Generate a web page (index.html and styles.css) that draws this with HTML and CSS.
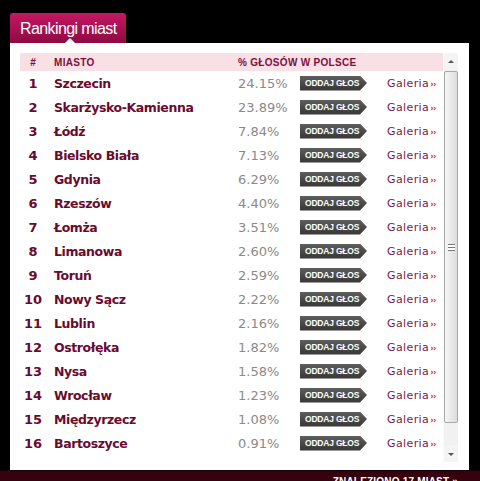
FILE: index.html
```html
<!DOCTYPE html>
<html lang="pl">
  <head>
    <meta charset="UTF-8" />
    <meta name="viewport" content="width=device-width, initial-scale=1.0" />
    <title>Rankingi miast</title>
    <link rel="stylesheet" href="styles.css">
  </head>

  <body>
    <div id="ranking">
      <div class="tab">Rankingi miast</div>

      <div class="panel">
        <div class="list">
          <div class="row head">
            <span class="num">#</span>
            <span class="city">MIASTO</span>
            <span class="pct">% GŁOSÓW W POLSCE</span>
          </div>

          <div class="row"><span class="num">1</span><span class="city">Szczecin</span><span class="pct">24.15%</span><span class="vote"><a class="btn">ODDAJ GŁOS</a></span><a class="gallery">Galeria<b>››</b></a></div>
          <div class="row"><span class="num">2</span><span class="city">Skarżysko-Kamienna</span><span class="pct">23.89%</span><span class="vote"><a class="btn">ODDAJ GŁOS</a></span><a class="gallery">Galeria<b>››</b></a></div>
          <div class="row"><span class="num">3</span><span class="city">Łódź</span><span class="pct">7.84%</span><span class="vote"><a class="btn">ODDAJ GŁOS</a></span><a class="gallery">Galeria<b>››</b></a></div>
          <div class="row"><span class="num">4</span><span class="city">Bielsko Biała</span><span class="pct">7.13%</span><span class="vote"><a class="btn">ODDAJ GŁOS</a></span><a class="gallery">Galeria<b>››</b></a></div>
          <div class="row"><span class="num">5</span><span class="city">Gdynia</span><span class="pct">6.29%</span><span class="vote"><a class="btn">ODDAJ GŁOS</a></span><a class="gallery">Galeria<b>››</b></a></div>
          <div class="row"><span class="num">6</span><span class="city">Rzeszów</span><span class="pct">4.40%</span><span class="vote"><a class="btn">ODDAJ GŁOS</a></span><a class="gallery">Galeria<b>››</b></a></div>
          <div class="row"><span class="num">7</span><span class="city">Łomża</span><span class="pct">3.51%</span><span class="vote"><a class="btn">ODDAJ GŁOS</a></span><a class="gallery">Galeria<b>››</b></a></div>
          <div class="row"><span class="num">8</span><span class="city">Limanowa</span><span class="pct">2.60%</span><span class="vote"><a class="btn">ODDAJ GŁOS</a></span><a class="gallery">Galeria<b>››</b></a></div>
          <div class="row"><span class="num">9</span><span class="city">Toruń</span><span class="pct">2.59%</span><span class="vote"><a class="btn">ODDAJ GŁOS</a></span><a class="gallery">Galeria<b>››</b></a></div>
          <div class="row"><span class="num">10</span><span class="city">Nowy Sącz</span><span class="pct">2.22%</span><span class="vote"><a class="btn">ODDAJ GŁOS</a></span><a class="gallery">Galeria<b>››</b></a></div>
          <div class="row"><span class="num">11</span><span class="city">Lublin</span><span class="pct">2.16%</span><span class="vote"><a class="btn">ODDAJ GŁOS</a></span><a class="gallery">Galeria<b>››</b></a></div>
          <div class="row"><span class="num">12</span><span class="city">Ostrołęka</span><span class="pct">1.82%</span><span class="vote"><a class="btn">ODDAJ GŁOS</a></span><a class="gallery">Galeria<b>››</b></a></div>
          <div class="row"><span class="num">13</span><span class="city">Nysa</span><span class="pct">1.58%</span><span class="vote"><a class="btn">ODDAJ GŁOS</a></span><a class="gallery">Galeria<b>››</b></a></div>
          <div class="row"><span class="num">14</span><span class="city">Wrocław</span><span class="pct">1.23%</span><span class="vote"><a class="btn">ODDAJ GŁOS</a></span><a class="gallery">Galeria<b>››</b></a></div>
          <div class="row"><span class="num">15</span><span class="city">Międzyrzecz</span><span class="pct">1.08%</span><span class="vote"><a class="btn">ODDAJ GŁOS</a></span><a class="gallery">Galeria<b>››</b></a></div>
          <div class="row"><span class="num">16</span><span class="city">Bartoszyce</span><span class="pct">0.91%</span><span class="vote"><a class="btn">ODDAJ GŁOS</a></span><a class="gallery">Galeria<b>››</b></a></div>
        </div>

        <div class="scrollbar">
          <div class="arrow up"></div>
          <div class="thumb"><span class="grip"></span></div>
          <div class="track"></div>
          <div class="arrow down"></div>
        </div>
      </div>

      <div class="footer">ZNALEZIONO 17 MIAST »</div>
    </div>
  </body>
</html>
```

FILE: styles.css
```css
* {
  box-sizing: border-box;
  margin: 0;
  padding: 0;
}

body {
  background-color: #000;
  font-family: "DejaVu Sans", Verdana, sans-serif;
}

#ranking {
  width: 480px;
  padding-top: 13px;
}

.tab {
  position: relative;
  display: inline-block;
  margin-left: 10px;
  height: 30px;
  padding: 7px 10px 0 10px;
  width: 116px;
  border-radius: 3px 3px 0 0;
  background: linear-gradient(#c51764, #8d0a41);
  color: #fff;
  font-family: "Liberation Sans", Arial, sans-serif;
  font-size: 16px;
  letter-spacing: -0.6px;
  white-space: nowrap;
}

.tab::after {
  content: "";
  position: absolute;
  left: 55px;
  bottom: 0;
  border-left: 5px solid transparent;
  border-right: 5px solid transparent;
  border-bottom: 5px solid #fff;
}

.panel {
  display: flex;
  margin-left: 10px;
  width: 459px;
  height: 427px;
  padding: 10px 11px 8px 10px;
  background-color: #fff;
}

.list {
  width: 423px;
  height: 409px;
  overflow: hidden;
}

.row {
  display: flex;
  align-items: center;
  height: 24px;
  color: #6a0a2e;
}

.row.head {
  height: 18px;
  background-color: #f9dfe6;
  font-family: "Liberation Sans", Arial, sans-serif;
  font-size: 10px;
  font-weight: bold;
  color: #7c0f3a;
}

.num {
  width: 26px;
  text-align: center;
  font-weight: bold;
  font-size: 13px;
  margin-right: 8px;
}

.head .num {
  font-size: 10px;
}

.city {
  width: 184px;
  font-weight: bold;
  font-size: 12.5px;
  letter-spacing: -0.4px;
  white-space: nowrap;
}

.head .city,
.head .pct {
  font-size: 10px;
  letter-spacing: 0.3px;
}

.pct {
  width: 62px;
  font-size: 13px;
  color: #8a8a8a;
  white-space: nowrap;
}

.head .pct {
  color: #7c0f3a;
}

.vote {
  width: 87px;
}

.btn {
  display: block;
  width: 67px;
  height: 15px;
  padding: 1px 0 0 5px;
  background: linear-gradient(#5e5e5e, #363636);
  clip-path: polygon(0 0, 60px 0, 67px 50%, 60px 100%, 0 100%);
  color: #fff;
  font-family: "Liberation Sans", Arial, sans-serif;
  font-size: 8.5px;
  line-height: 13px;
  font-weight: bold;
  letter-spacing: -0.2px;
  white-space: nowrap;
}

.gallery {
  font-size: 11px;
  letter-spacing: 0.4px;
  color: #7b1a4c;
  white-space: nowrap;
}

.gallery b {
  font-size: 8px;
  color: #b0205e;
  letter-spacing: -0.5px;
  margin-left: 1px;
}

.scrollbar {
  display: flex;
  flex-direction: column;
  width: 15px;
  height: 409px;
  background-color: #f1f1f1;
  border-left: 1px solid #fbfbfb;
}

.arrow {
  position: relative;
  height: 17px;
  background-color: #f4f4f4;
}

.arrow::after {
  content: "";
  position: absolute;
  left: 4px;
  border-left: 3px solid transparent;
  border-right: 3px solid transparent;
}

.arrow.up::after {
  top: 7px;
  border-bottom: 3px solid #555;
}

.arrow.down::after {
  top: 8px;
  border-top: 3px solid #555;
}

.thumb {
  display: flex;
  align-items: center;
  justify-content: center;
  height: 352px;
  margin: 1px 0;
  border: 1px solid #a8a8a8;
  border-radius: 2px;
  background: linear-gradient(90deg, #f6f6f6, #dcdcdc);
}

.grip {
  width: 7px;
  height: 7px;
  border-top: 1px solid #777;
  border-bottom: 1px solid #777;
  background: linear-gradient(#fff 2px, #777 2px, #777 3px, #fff 3px);
}

.track {
  flex: 1;
}

.footer {
  height: 11px;
  padding: 5px 22px 0 0;
  background-color: #37000f;
  border-top: 1px solid #12000a;
  color: #fff;
  font-family: "Liberation Sans", Arial, sans-serif;
  font-size: 10px;
  font-weight: bold;
  text-align: right;
  letter-spacing: 0.2px;
  overflow: hidden;
  line-height: 11px;
}
```
